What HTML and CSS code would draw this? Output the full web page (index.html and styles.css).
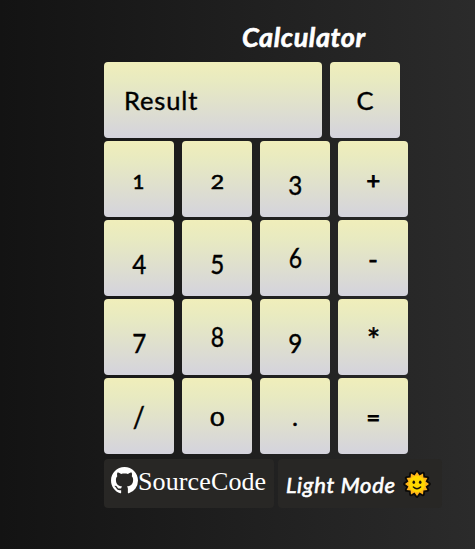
FILE: index.html
```html
<!DOCTYPE html>
<html lang="en">
<head>
<meta charset="utf-8">
<title>Calculator</title>
<link rel="stylesheet" href="styles.css">
</head>
<body>
<main class="calculator">
  <h1 class="title">Calculator</h1>
  <div class="row">
    <div class="key display">Result</div>
    <button class="key">C</button>
  </div>
  <div class="row">
    <button class="key"><span class="small one">1</span></button>
    <button class="key"><span class="small">2</span></button>
    <button class="key"><span class="low">3</span></button>
    <button class="key"><span class="plus">+</span></button>
  </div>
  <div class="row">
    <button class="key"><span class="low">4</span></button>
    <button class="key"><span class="low">5</span></button>
    <button class="key"><span class="tall">6</span></button>
    <button class="key"><span class="minus">-</span></button>
  </div>
  <div class="row">
    <button class="key"><span class="low">7</span></button>
    <button class="key"><span class="tall">8</span></button>
    <button class="key"><span class="low">9</span></button>
    <button class="key"><span class="star">*</span></button>
  </div>
  <div class="row">
    <button class="key"><span class="slash">/</span></button>
    <button class="key"><span class="small zero">0</span></button>
    <button class="key">.</button>
    <button class="key"><span class="equals">=</span></button>
  </div>
  <div class="footer">
    <button class="link source">
      <svg class="github" viewBox="0 0 16 16" fill="#fff"><path d="M8 0C3.58 0 0 3.58 0 8c0 3.54 2.29 6.53 5.47 7.59.4.07.55-.17.55-.38 0-.19-.01-.82-.01-1.49-2.01.37-2.53-.49-2.69-.94-.09-.23-.48-.94-.82-1.13-.28-.15-.68-.52-.01-.53.63-.01 1.08.58 1.23.82.72 1.21 1.87.87 2.33.66.07-.52.28-.87.51-1.07-1.78-.2-3.64-.89-3.64-3.95 0-.87.31-1.59.82-2.15-.08-.2-.36-1.02.08-2.12 0 0 .67-.21 2.2.82.64-.18 1.32-.27 2-.27s1.36.09 2 .27c1.53-1.04 2.2-.82 2.2-.82.44 1.1.16 1.92.08 2.12.51.56.82 1.27.82 2.15 0 3.07-1.87 3.75-3.65 3.95.29.25.54.73.54 1.48 0 1.07-.01 1.93-.01 2.2 0 .21.15.46.55.38A8.01 8.01 0 0 0 16 8c0-4.42-3.58-8-8-8z"/></svg><span>SourceCode</span>
    </button>
    <button class="link mode">
      <span class="mode-label">Light Mode</span>
      <svg class="sun" viewBox="-14 -14 28 28">
        <path d="M0-12 2.5-8.6 6-10.4 6.4-6.4 10.4-6 8.6-2.5 12 0 8.6 2.5 10.4 6 6.4 6.4 6 10.4 2.5 8.6 0 12-2.5 8.6-6 10.4-6.4 6.4-10.4 6-8.6 2.5-12 0-8.6-2.5-10.4-6-6.4-6.4-6-10.4-2.5-8.6Z" fill="#ffb51b" stroke="#0b0a09" stroke-width="3.6" stroke-linejoin="round" paint-order="stroke"/>
        <circle r="8.2" fill="#ffd800"/>
        <ellipse cx="-3.2" cy="-1.8" rx="1.3" ry="1.7" fill="#17120a"/>
        <ellipse cx="3.2" cy="-1.8" rx="1.3" ry="1.7" fill="#17120a"/>
        <path d="M-3.6 3Q0 6.4 3.6 3" fill="none" stroke="#17120a" stroke-width="1.5" stroke-linecap="round"/>
      </svg>
    </button>
  </div>
</main>
</body>
</html>
```
FILE: styles.css
```css
* { box-sizing: border-box; }

html { height: 100%; }

body {
  margin: 0;
  height: 100%;
  background: linear-gradient(to right, #131313, #2b2b2b);
  font-family: Lato, "Open Sans", sans-serif;
}

.calculator {
  display: flex;
  flex-direction: column;
  gap: 3px;
  padding: 22px 0 0 104px;
}

.title {
  height: 37px;
  margin: 0;
  padding-left: 138px;
  line-height: 30px;
  color: #fff;
  font-size: 27px;
  font-weight: 700;
  font-style: italic;
  letter-spacing: 0.6px;
  -webkit-text-stroke: 0.6px #fff;
}

.row { display: flex; gap: 8px; }

.key {
  width: 70px;
  height: 76px;
  padding: 0;
  border: 0;
  border-radius: 4px;
  background: linear-gradient(#f0eeba, #e8eac1 25%, #d4d3dd);
  color: #000;
  font: 400 25.5px/76px Lato, "Open Sans", sans-serif;
  text-align: center;
  -webkit-text-stroke: 0.4px #000;
}

.display {
  width: 218px;
  padding-left: 20px;
  text-align: left;
  letter-spacing: 0.85px;
}

.key span {
  display: inline-block;
  transform-origin: 50% 48px;
}

.small { transform: scale(0.9, 0.76); -webkit-text-stroke: 0.8px #000; }
.one { transform: translateX(-1px) scale(0.8, 0.76); }
.zero { transform: scale(0.95, 0.76); }
.low { transform: translateY(5.5px) scale(0.95, 1.08); }
.tall { transform: scale(0.9, 1.04); }
.plus,
.equals { transform: scale(0.92); -webkit-text-stroke: 1.1px #000; }
.minus { transform: translateY(1px); -webkit-text-stroke: 0.8px #000; }
.slash { transform: translateY(1px) scale(1.05, 1.1); }
.star { transform: translateY(5px) scale(1.25); }

.footer {
  display: flex;
  gap: 4px;
  padding-top: 2px;
}

.link {
  display: flex;
  height: 49px;
  padding: 0;
  border: 0;
  border-radius: 4px;
  background: #282725;
  color: #fff;
  white-space: nowrap;
}

.source {
  width: 170px;
  padding-left: 7px;
  font: 26px/46px "Liberation Serif", serif;
  letter-spacing: 0.12px;
}

.github { width: 27px; height: 27px; margin-top: 8px; }

.mode {
  width: 164px;
  padding-left: 8px;
  font: italic 400 22px/52px Lato, "Open Sans", sans-serif;
  letter-spacing: 0.7px;
  -webkit-text-stroke: 0.6px #fff;
}

.mode-label { width: 117px; text-align: left; }

.sun { width: 28px; height: 28px; margin-top: 11px; }
```
